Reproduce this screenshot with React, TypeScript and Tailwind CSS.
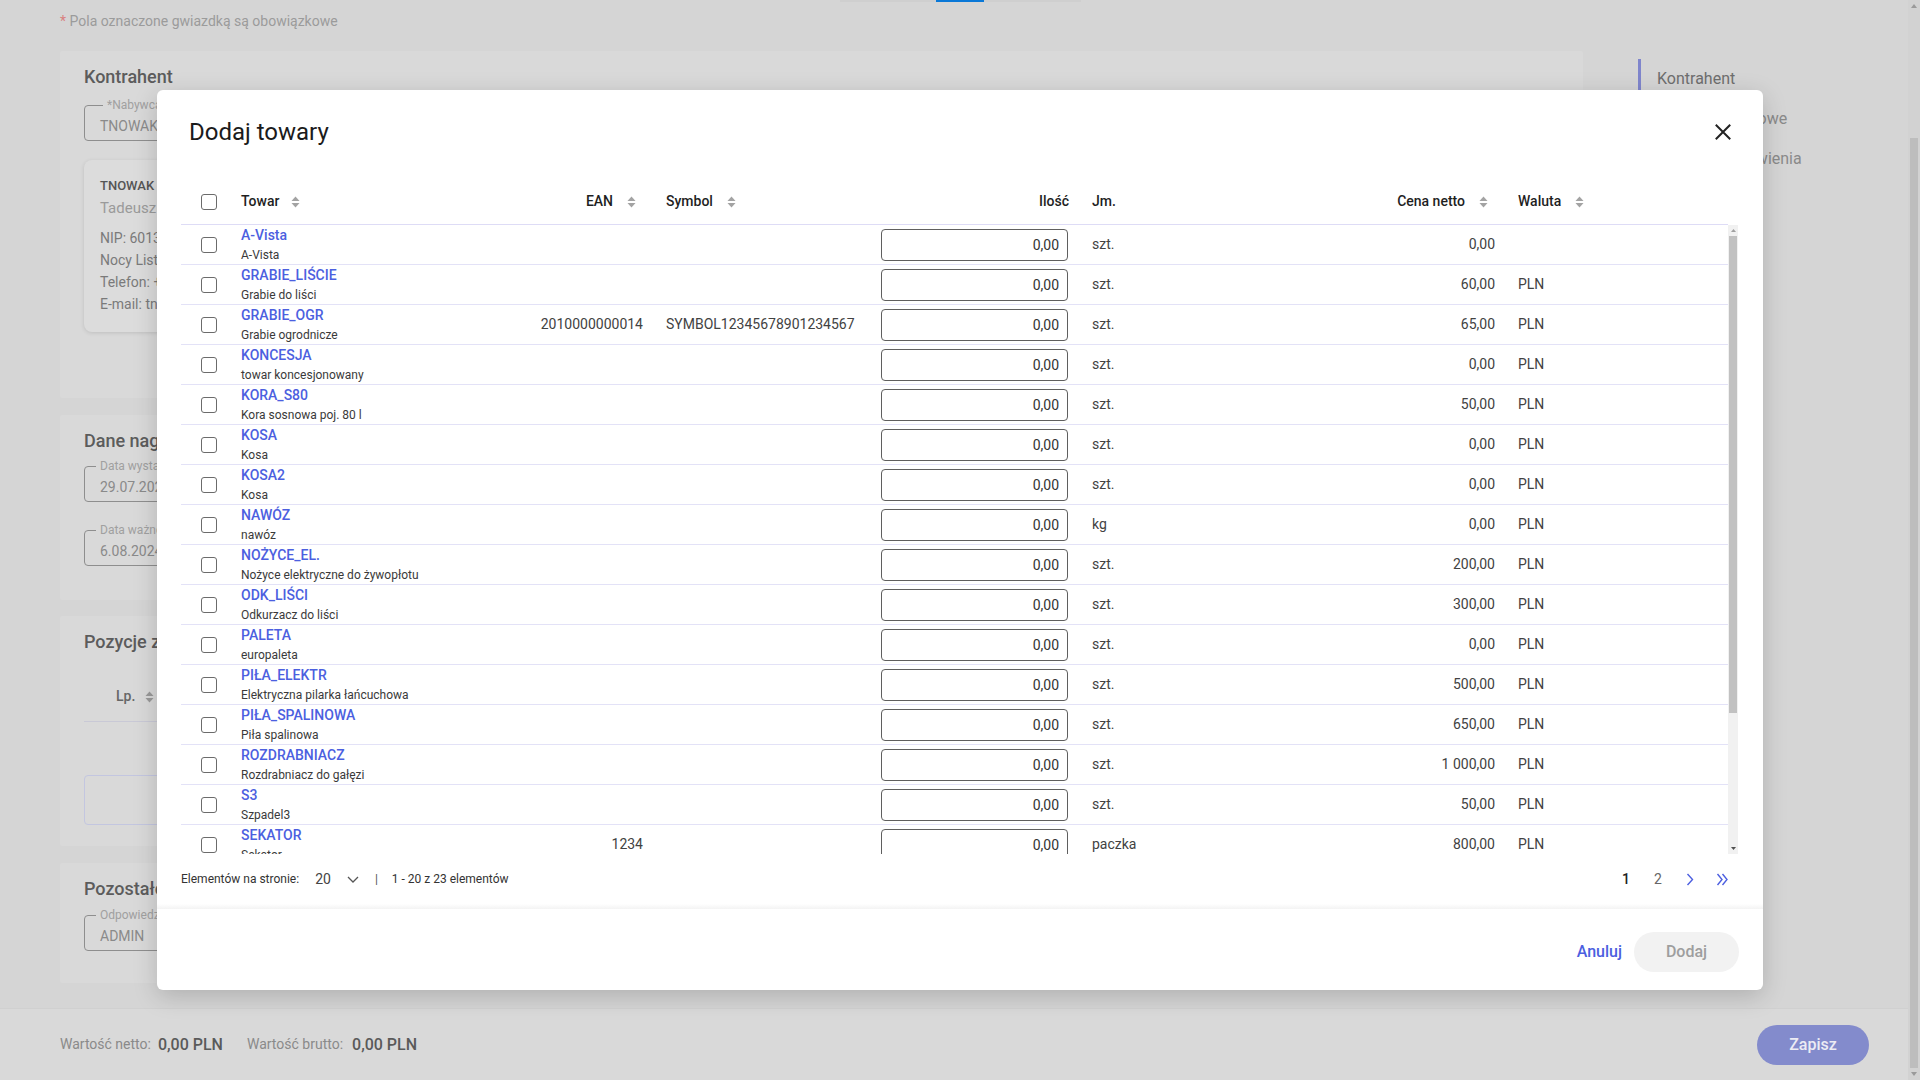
import React from 'react'

type Item = { code: string; name: string; ean?: string; symbol?: string; unit: string; price: string; currency?: string }

const items: Item[] = [
  { code: 'A-Vista', name: 'A-Vista', unit: 'szt.', price: '0,00' },
  { code: 'GRABIE_LIŚCIE', name: 'Grabie do liści', unit: 'szt.', price: '60,00', currency: 'PLN' },
  { code: 'GRABIE_OGR', name: 'Grabie ogrodnicze', ean: '2010000000014', symbol: 'SYMBOL12345678901234567', unit: 'szt.', price: '65,00', currency: 'PLN' },
  { code: 'KONCESJA', name: 'towar koncesjonowany', unit: 'szt.', price: '0,00', currency: 'PLN' },
  { code: 'KORA_S80', name: 'Kora sosnowa poj. 80 l', unit: 'szt.', price: '50,00', currency: 'PLN' },
  { code: 'KOSA', name: 'Kosa', unit: 'szt.', price: '0,00', currency: 'PLN' },
  { code: 'KOSA2', name: 'Kosa', unit: 'szt.', price: '0,00', currency: 'PLN' },
  { code: 'NAWÓZ', name: 'nawóz', unit: 'kg', price: '0,00', currency: 'PLN' },
  { code: 'NOŻYCE_EL.', name: 'Nożyce elektryczne do żywopłotu', unit: 'szt.', price: '200,00', currency: 'PLN' },
  { code: 'ODK_LIŚCI', name: 'Odkurzacz do liści', unit: 'szt.', price: '300,00', currency: 'PLN' },
  { code: 'PALETA', name: 'europaleta', unit: 'szt.', price: '0,00', currency: 'PLN' },
  { code: 'PIŁA_ELEKTR', name: 'Elektryczna pilarka łańcuchowa', unit: 'szt.', price: '500,00', currency: 'PLN' },
  { code: 'PIŁA_SPALINOWA', name: 'Piła spalinowa', unit: 'szt.', price: '650,00', currency: 'PLN' },
  { code: 'ROZDRABNIACZ', name: 'Rozdrabniacz do gałęzi', unit: 'szt.', price: '1 000,00', currency: 'PLN' },
  { code: 'S3', name: 'Szpadel3', unit: 'szt.', price: '50,00', currency: 'PLN' },
  { code: 'SEKATOR', name: 'Sekator', ean: '1234', unit: 'paczka', price: '800,00', currency: 'PLN' },
]

const cols = 'grid grid-cols-[60px_279px_135px_215px_210px_220px_207px_221px]'

const SortIcon = ({ color = '#a3a3a3' }: { color?: string }) => (
  <svg width="9" height="12" viewBox="0 0 9 12">
    <path d="M0.5 5 L4.5 0.5 L8.5 5 Z" fill={color} />
    <path d="M0.5 7 L4.5 11.5 L8.5 7 Z" fill={color} />
  </svg>
)

const Checkbox = () => (
  <div className="w-[16px] h-[16px] rounded-[3px] border-[1.5px] border-[#6b6b6b] bg-white" />
)

const Field = ({ label, value, width = 'w-[560px]', required = false }: { label: string; value: string; width?: string; required?: boolean }) => (
  <fieldset className={`${width} h-[42px] border border-[#8e8e8e] rounded-[4px] px-[15px]`}>
    <legend className={`${required ? 'ml-[3px]' : 'ml-[-4px]'} px-[4px] text-[12px] leading-[12px] text-[#a0a0a0]`}>{label}</legend>
    <div className="text-[14px] leading-[20px] text-[#8a8a8a] mt-[5px]">{value}</div>
  </fieldset>
)

const Card = ({ title, className, children }: { title: string; className: string; children?: React.ReactNode }) => (
  <div className={`bg-[#d9d9d9] rounded-[2px] px-[24px] pt-[14px] ${className}`}>
    <h2 className="text-[18px] leading-[24px] font-medium text-[#5c5c5c]">{title}</h2>
    {children}
  </div>
)

const App = () => {
  return (
    <div className="relative w-[1920px] h-[1080px] overflow-hidden flex font-[Roboto,sans-serif] bg-[#d5d5d5]">
      {/* page under the dialog */}
      <div className="w-[1908px] flex flex-col">
        <div className="flex-1 flex flex-col">
          <div className="ml-[840px] w-[241px] h-[2px] bg-[#cfcfcf] flex">
            <div className="ml-[96px] w-[48px] h-[2px] bg-[#0a78d7]" />
          </div>
          <div className="pl-[60px] mt-[11px] text-[14px] leading-[17px] text-[#9b9b9b]">
            <span className="text-[#d98080]">* </span>Pola oznaczone gwiazdką są obowiązkowe
          </div>
          <div className="flex mt-[21px]">
            <div className="ml-[60px] w-[1523px] flex flex-col">
              <Card title="Kontrahent" className="h-[347px]">
                <div className="mt-[10px]">
                  <Field label="*Nabywca" value="TNOWAK" width="w-[700px]" required />
                </div>
                <div className="mt-[19px] w-[480px] h-[172px] rounded-[8px] bg-[#dcdcdc] shadow-[0_1px_4px_rgba(0,0,0,0.12)] px-[16px] pt-[18px]">
                  <div className="text-[13px] leading-[16px] font-medium text-[#555]">TNOWAK</div>
                  <div className="text-[15px] leading-[18px] text-[#9a9a9a] mt-[5px]">Tadeusz Nowak</div>
                  <div className="text-[14px] leading-[22px] text-[#7a7a7a] mt-[10px]">
                    <div>NIP: 6013456789</div>
                    <div>Nocy Listopadowej 12, 00-001 Warszawa</div>
                    <div>Telefon: +48 600 100 200</div>
                    <div>E-mail: tnowak@example.pl</div>
                  </div>
                </div>
              </Card>
              <Card title="Dane nagłówkowe" className="h-[185px] mt-[17px]">
                <div className="mt-[7px] flex flex-col gap-[22px]">
                  <Field label="Data wystawienia" value="29.07.2024" width="w-[400px]" />
                  <Field label="Data ważności" value="6.08.2024" width="w-[400px]" />
                </div>
              </Card>
              <Card title="Pozycje zamówienia" className="h-[230px] mt-[16px]">
                <div className="mt-[32px] flex items-center gap-[10px] pl-[32px] text-[14px] font-medium text-[#666]">
                  <span>Lp.</span>
                  <SortIcon color="#999" />
                </div>
                <div className="mt-[14px] h-px bg-[#c9c9d6]" />
                <div className="mt-[53px] h-[50px] border border-[#c3c6e0] rounded-[4px]" />
              </Card>
              <Card title="Pozostałe" className="h-[120px] mt-[17px]">
                <div className="mt-[8px]">
                  <Field label="Odpowiedzialny" value="ADMIN" width="w-[400px]" />
                </div>
              </Card>
            </div>
            <nav className="ml-[55px] pt-[8px] flex flex-col">
              <div className="h-[40px] flex items-center border-l-[3px] border-[#7f85cc] pl-[16px] text-[16px] text-[#6e6e6e]">Kontrahent</div>
              <div className="h-[40px] flex items-center pl-[19px] text-[16px] text-[#8a8a8a]">Dane nagłówkowe</div>
              <div className="h-[40px] flex items-center pl-[19px] text-[16px] text-[#8a8a8a]">Pozycje zamówienia</div>
              <div className="h-[40px] flex items-center pl-[19px] text-[16px] text-[#8a8a8a]">Pozostałe</div>
            </nav>
          </div>
        </div>
        <div className="h-[72px] bg-[#d9d9d9] border-t border-[#d0d0d0] flex items-center pl-[60px] pr-[39px]">
          <span className="text-[14px] text-[#8a8a8a]">Wartość netto:</span>
          <span className="ml-[7px] text-[16px] font-medium text-[#5a5a5a]">0,00 PLN</span>
          <span className="ml-[24px] text-[14px] text-[#8a8a8a]">Wartość brutto:</span>
          <span className="ml-[9px] text-[16px] font-medium text-[#5a5a5a]">0,00 PLN</span>
          <button className="ml-auto w-[112px] h-[40px] rounded-full bg-[#838bcc] text-[16px] font-medium text-[#ececf4]">Zapisz</button>
        </div>
      </div>
      {/* page scrollbar */}
      <div className="w-[12px] bg-[#d2d2d2] flex flex-col items-center">
        <div className="h-[12px] flex items-center justify-center">
          <svg width="6" height="4" viewBox="0 0 6 4"><path d="M0 4 L3 0 L6 4 Z" fill="#9a9a9a" /></svg>
        </div>
        <div className="mt-[126px] w-[8px] h-[930px] bg-[#bdbdbd]" />
        <div className="flex-1" />
        <div className="h-[12px] flex items-center justify-center">
          <svg width="6" height="4" viewBox="0 0 6 4"><path d="M0 0 L3 4 L6 0 Z" fill="#9a9a9a" /></svg>
        </div>
      </div>

      {/* dialog */}
      <div className="absolute left-[157px] top-[90px] w-[1606px] h-[900px] bg-white rounded-[6px] shadow-[0_6px_24px_rgba(0,0,0,0.18)] flex flex-col">
        <div className="pt-[26px] pl-[32px] pr-[32px] h-[58px] flex items-center justify-between">
          <h1 className="text-[24px] leading-[32px] text-[#1b1b1b]">Dodaj towary</h1>
          <svg width="16" height="16" viewBox="0 0 16 16">
            <path d="M1.5 1.5 L14.5 14.5 M14.5 1.5 L1.5 14.5" stroke="#222" strokeWidth="2" strokeLinecap="square" />
          </svg>
        </div>

        <div className="ml-[24px] w-[1557px] mt-[31px]">
          <div className={`${cols} h-[46px] items-center border-b border-[#dedcf6] text-[14px] font-medium text-[#1f1f1f] w-[1547px]`}>
            <div className="pl-[20px]"><Checkbox /></div>
            <div className="flex items-center gap-[12px]">Towar<SortIcon /></div>
            <div className="flex items-center justify-end gap-[14px] pr-[19px]">EAN<SortIcon /></div>
            <div className="flex items-center gap-[14px] pl-[11px]">Symbol<SortIcon /></div>
            <div className="text-right pr-[11px]">Ilość</div>
            <div className="pl-[12px]">Jm.</div>
            <div className="flex items-center justify-end gap-[14px] pr-[19px]">Cena netto<SortIcon /></div>
            <div className="flex items-center gap-[14px] pl-[11px]">Waluta<SortIcon /></div>
          </div>
          <div className="h-[629px] overflow-hidden flex">
            <div className="w-[1547px]">
              {items.map((it) => (
                <div key={it.code} className={`${cols} h-[40px] items-center border-b border-[#e3e2f7] text-[14px] text-[#424242]`}>
                  <div className="pl-[20px]"><Checkbox /></div>
                  <div className="flex flex-col gap-[4px] pt-[1px]">
                    <span className="text-[14px] leading-[17px] font-medium text-[#4c5fe0]">{it.code}</span>
                    <span className="text-[12px] leading-[15px] text-[#3a3a3a]">{it.name}</span>
                  </div>
                  <div className="text-right pr-[12px]">{it.ean}</div>
                  <div className="pl-[11px] whitespace-nowrap">{it.symbol}</div>
                  <div className="pl-[11px]">
                    <input
                      readOnly
                      defaultValue="0,00"
                      className="w-[187px] h-[32px] border border-[#5f5f5f] rounded-[4px] text-right pr-[8px] text-[14px] text-[#333] outline-none"
                    />
                  </div>
                  <div className="pl-[12px]">{it.unit}</div>
                  <div className="text-right pr-[12px]">{it.price}</div>
                  <div className="pl-[11px]">{it.currency}</div>
                </div>
              ))}
            </div>
            <div className="w-[10px] bg-[#f1f1f1] flex flex-col items-center">
              <div className="h-[11px] flex items-center justify-center">
                <svg width="5" height="3" viewBox="0 0 5 3"><path d="M0 3 L2.5 0 L5 3 Z" fill="#a0a0a0" /></svg>
              </div>
              <div className="w-[8px] h-[477px] bg-[#c1c1c1]" />
              <div className="flex-1" />
              <div className="h-[11px] flex items-center justify-center">
                <svg width="5" height="3" viewBox="0 0 5 3"><path d="M0 0 L2.5 3 L5 0 Z" fill="#505050" /></svg>
              </div>
            </div>
          </div>
        </div>

        <div className="h-[50px] ml-[24px] mr-[25px] flex items-center text-[#333]">
          <span className="text-[12px]">Elementów na stronie:</span>
          <span className="ml-[16px] text-[14px] text-[#444]">20</span>
          <svg width="12" height="7" viewBox="0 0 12 7" className="ml-[16px]">
            <path d="M1 1 L6 6 L11 1" stroke="#555" strokeWidth="1.3" fill="none" />
          </svg>
          <span className="ml-[16px] text-[12px] text-[#555]">|</span>
          <span className="ml-[14px] text-[12px]">1 - 20 z 23 elementów</span>
          <div className="ml-auto flex items-center text-[14px]">
            <span className="w-[32px] text-center font-medium text-[#222]">1</span>
            <span className="w-[32px] text-center text-[#666]">2</span>
            <span className="w-[32px] flex justify-center">
              <svg width="8" height="13" viewBox="0 0 8 13"><path d="M1.5 1 L6.5 6.5 L1.5 12" stroke="#4c5fe0" strokeWidth="1.4" fill="none" /></svg>
            </span>
            <span className="w-[32px] flex justify-center">
              <svg width="13" height="13" viewBox="0 0 13 13">
                <path d="M1.5 1 L6 6.5 L1.5 12 M6.5 1 L11 6.5 L6.5 12" stroke="#4c5fe0" strokeWidth="1.4" fill="none" />
              </svg>
            </span>
          </div>
        </div>

        <div className="h-[5px] bg-gradient-to-b from-white to-[#f3f3f3]" />
        <div className="flex-1 flex items-center justify-end gap-[12px] pr-[24px] pt-[4px]">
          <button className="text-[16px] font-medium text-[#4c5fe0]">Anuluj</button>
          <button className="w-[105px] h-[40px] rounded-full bg-[#f2f2f2] text-[16px] font-medium text-[#9e9e9e]">Dodaj</button>
        </div>
      </div>
    </div>
  )
}

export default App
